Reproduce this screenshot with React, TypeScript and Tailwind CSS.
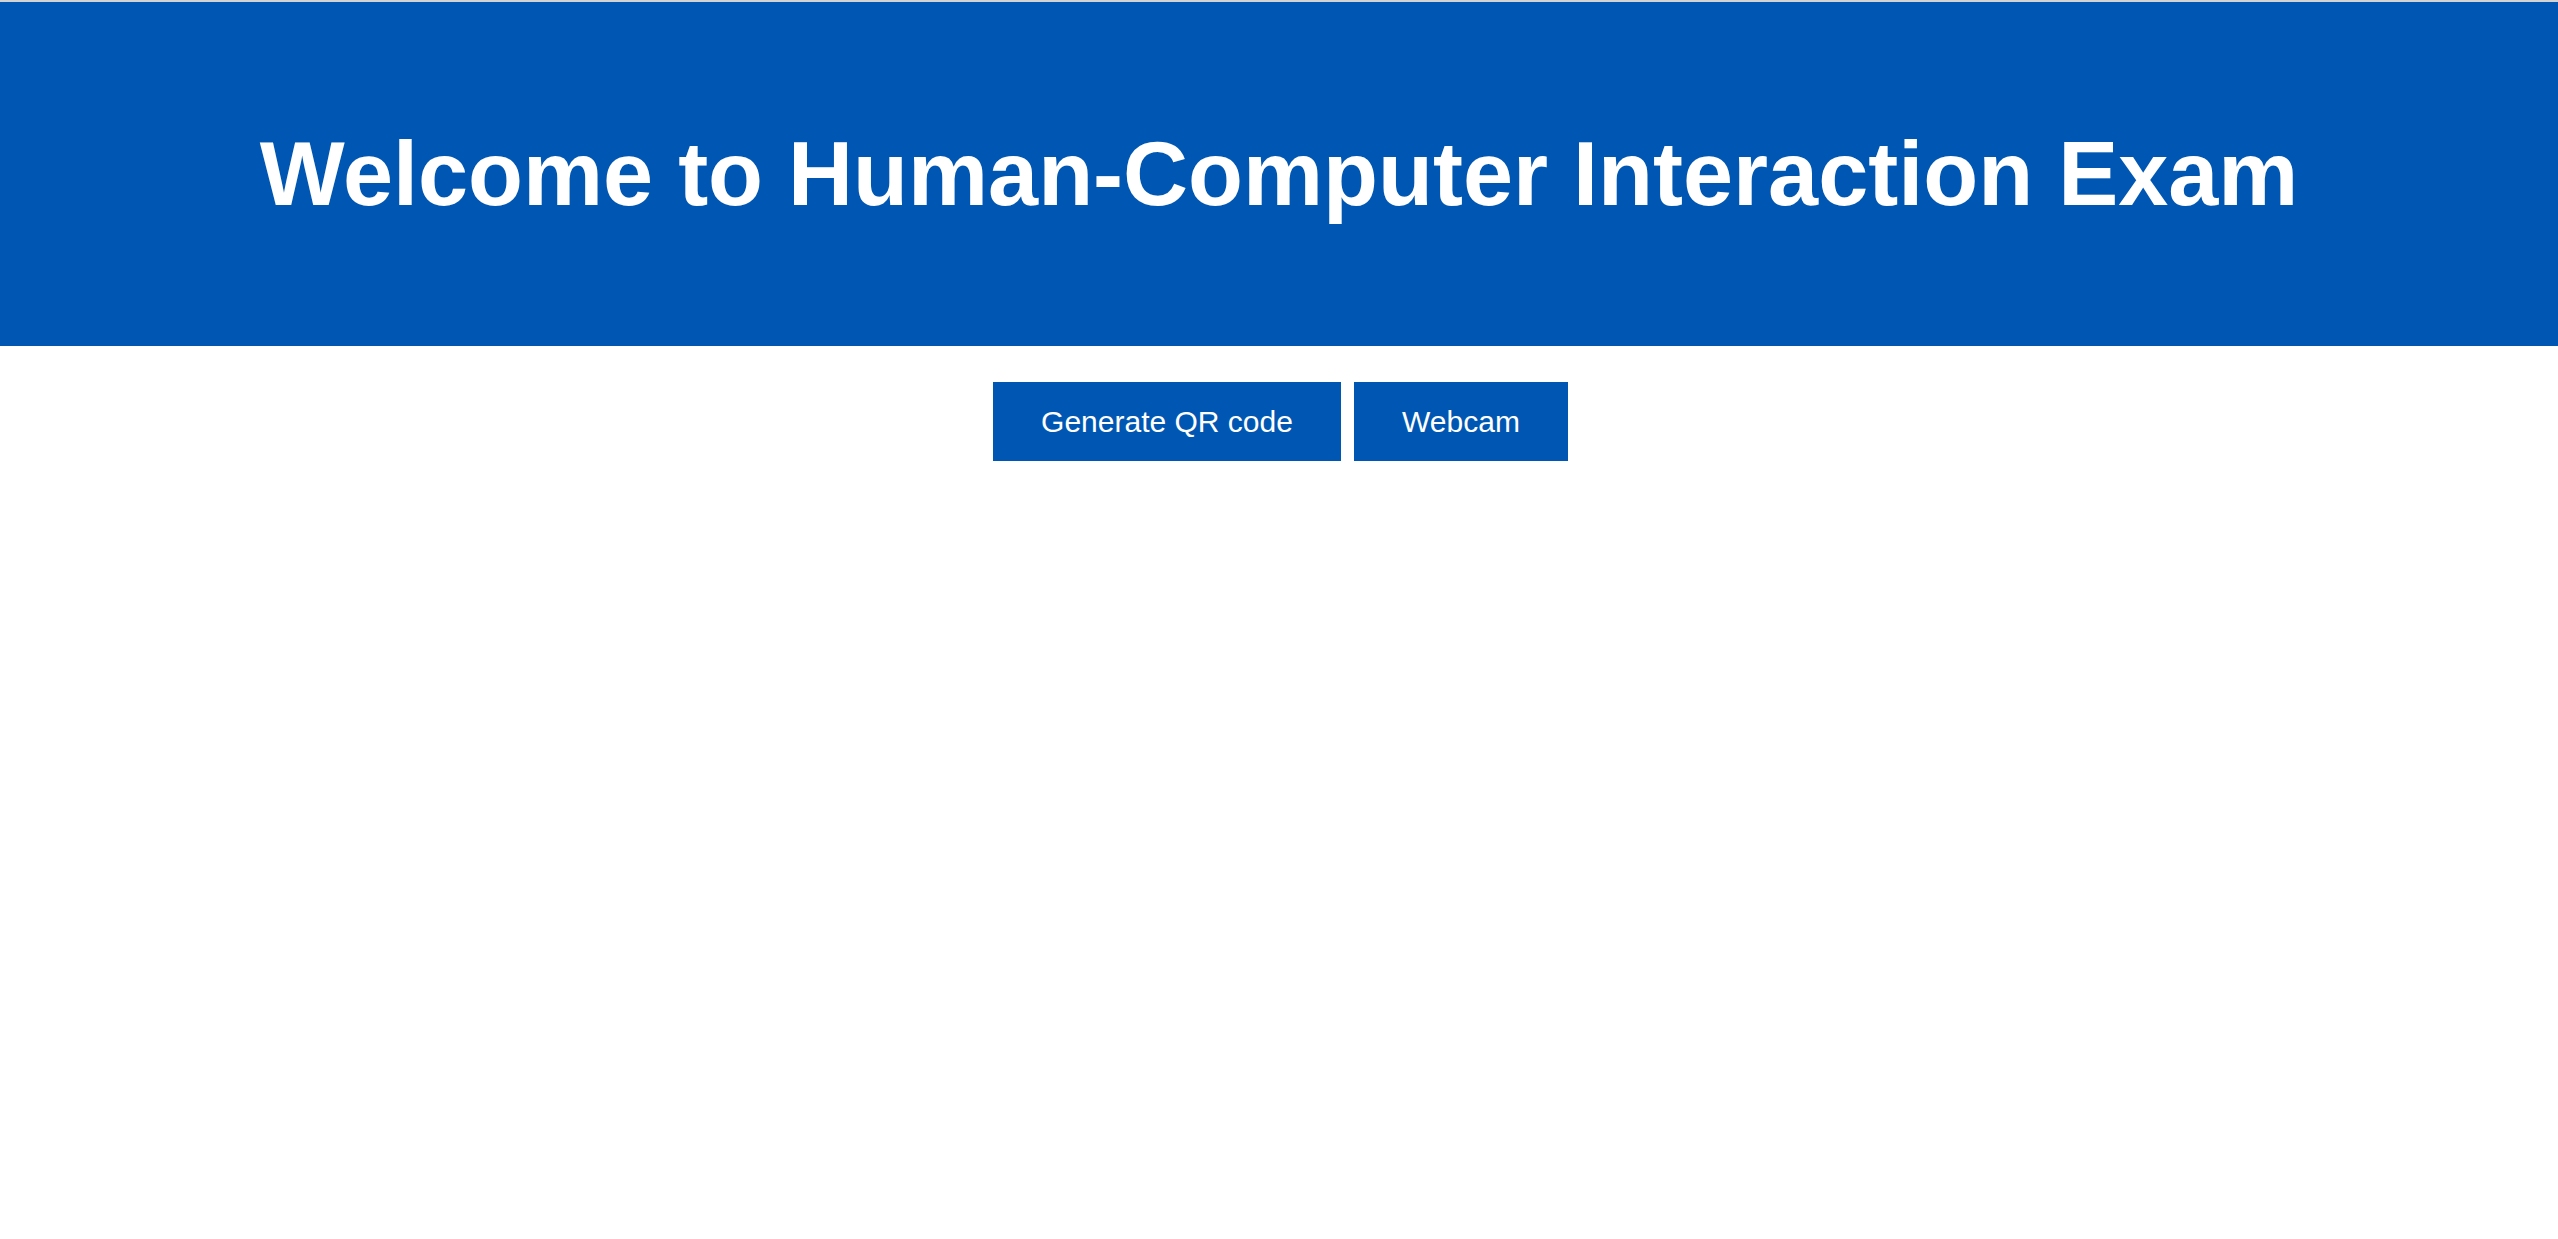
import React from "react";

export default function App() {
  return (
    <div className="min-h-screen bg-white" style={{ fontFamily: '"Liberation Sans", Arial, sans-serif' }}>
      <div className="h-[2px] bg-[#d3d3d3]" />
      <header className="flex h-[344px] items-center justify-center bg-[#0057b3]">
        <h1 className="text-[90px] font-bold leading-none text-white">
          Welcome to Human-Computer Interaction Exam
        </h1>
      </header>
      <div className="mt-[36px] flex justify-center gap-[13px] pl-[3px]">
        <button className="flex h-[79px] w-[348px] items-center justify-center bg-[#0057b3] pb-[1px] text-[30px] text-white">
          Generate QR code
        </button>
        <button className="flex h-[79px] w-[214px] items-center justify-center bg-[#0057b3] pb-[1px] text-[30px] text-white">
          Webcam
        </button>
      </div>
    </div>
  );
}
